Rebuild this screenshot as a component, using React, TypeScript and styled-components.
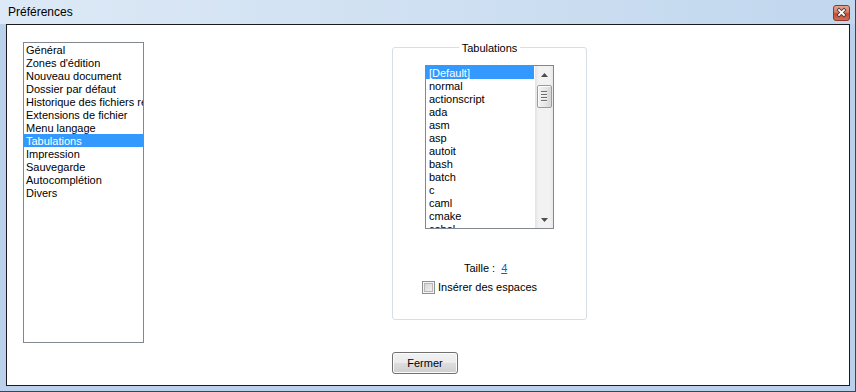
import React, { useState } from 'react'
import styled, { createGlobalStyle } from 'styled-components'

const GlobalStyle = createGlobalStyle`
    html, body {
        margin: 0;
        padding: 0;
        background: #ffffff;
    }
    body {
        font-family: "Liberation Sans", Arial, sans-serif;
        font-size: 11px;
        color: #000000;
    }
`

const categories = [
    'Général',
    "Zones d'édition",
    'Nouveau document',
    'Dossier par défaut',
    'Historique des fichiers récents',
    'Extensions de fichier',
    'Menu langage',
    'Tabulations',
    'Impression',
    'Sauvegarde',
    'Autocomplétion',
    'Divers',
]

const languages = [
    '[Default]',
    'normal',
    'actionscript',
    'ada',
    'asm',
    'asp',
    'autoit',
    'bash',
    'batch',
    'c',
    'caml',
    'cmake',
    'cobol',
]

const CloseIcon: React.FC = () => (
    <svg width="17" height="16" viewBox="0 0 17 16">
        <defs>
            <linearGradient id="closeBg" x1="0" y1="0" x2="0" y2="1">
                <stop offset="0" stopColor="#e9a995" />
                <stop offset="0.45" stopColor="#d77a62" />
                <stop offset="0.55" stopColor="#c6492f" />
                <stop offset="1" stopColor="#d2705a" />
            </linearGradient>
        </defs>
        <rect x="0.5" y="0.5" width="16" height="15" rx="2.5" fill="url(#closeBg)" stroke="#8c3b2b" />
        <path d="M6 5 L11 10 M11 5 L6 10" stroke="#3a3a3a" strokeWidth="3.4" strokeLinecap="square" />
        <path d="M6 5 L11 10 M11 5 L6 10" stroke="#ffffff" strokeWidth="1.8" strokeLinecap="square" />
    </svg>
)

export default function App() {
    const [selected, setSelected] = useState<number>(7)
    const [lang, setLang] = useState<number>(0)
    const [useSpaces, setUseSpaces] = useState<boolean>(false)

    return (
        <>
            <GlobalStyle />
            <Window>
                <TitleBar>
                    <Title>Préférences</Title>
                    <CloseButton aria-label="Fermer">
                        <CloseIcon />
                    </CloseButton>
                </TitleBar>
                <Frame>
                    <Client>
                        <Body>
                            <CategoryList>
                                {categories.map((c, i) => (
                                    <CategoryItem
                                        key={c}
                                        $selected={i === selected}
                                        onClick={() => setSelected(i)}
                                    >
                                        {c}
                                    </CategoryItem>
                                ))}
                            </CategoryList>
                            <GroupBox>
                                <Legend>Tabulations</Legend>
                                <LangList>
                                    <LangItems>
                                        {languages.map((l, i) => (
                                            <LangItem
                                                key={l}
                                                $selected={i === lang}
                                                onClick={() => setLang(i)}
                                            >
                                                {l}
                                            </LangItem>
                                        ))}
                                    </LangItems>
                                    <ScrollBar>
                                        <ArrowButton>
                                            <svg width="7" height="4" viewBox="0 0 7 4">
                                                <path d="M0 4 L3.5 0 L7 4 Z" fill="#4d4d4d" />
                                            </svg>
                                        </ArrowButton>
                                        <Thumb>
                                            <Grip />
                                            <Grip />
                                            <Grip />
                                            <Grip />
                                        </Thumb>
                                        <Track />
                                        <ArrowButton>
                                            <svg width="7" height="4" viewBox="0 0 7 4">
                                                <path d="M0 0 L7 0 L3.5 4 Z" fill="#4d4d4d" />
                                            </svg>
                                        </ArrowButton>
                                    </ScrollBar>
                                </LangList>
                                <SizeRow>
                                    <span>Taille :</span>
                                    <SizeLink href="#">4</SizeLink>
                                </SizeRow>
                                <CheckRow onClick={() => setUseSpaces(!useSpaces)}>
                                    <CheckBox $checked={useSpaces} />
                                    <span>Insérer des espaces</span>
                                </CheckRow>
                            </GroupBox>
                        </Body>
                        <Footer>
                            <Button>Fermer</Button>
                        </Footer>
                    </Client>
                </Frame>
            </Window>
        </>
    )
}

const Window = styled.div`
    width: 856px;
    height: 392px;
    box-sizing: border-box;
    display: flex;
    flex-direction: column;
    border-right: 1px solid #3c4552;
    border-bottom: 1px solid #3c4552;
    background: #b9d1ea;
`

const TitleBar = styled.div`
    height: 24px;
    flex-shrink: 0;
    display: flex;
    flex-direction: row;
    align-items: flex-start;
    justify-content: space-between;
    padding: 0 5px 0 8px;
    background: linear-gradient(to right, #dde9f6 0%, #cfe0f2 50%, #c1d7ee 100%);
`

const Title = styled.div`
    font-size: 12px;
    line-height: 25px;
    color: #000000;
`

const CloseButton = styled.div`
    width: 17px;
    height: 16px;
    margin-top: 5px;
    display: flex;
`

const Frame = styled.div`
    flex: 1;
    display: flex;
    padding: 0 5px 5px 6px;
    background: #b9d1ea;
`

const Client = styled.div`
    flex: 1;
    display: flex;
    flex-direction: column;
    border: 1px solid #1b1b1b;
    background: #ffffff;
    padding: 17px 0 0 16px;
`

const Body = styled.div`
    display: flex;
    flex-direction: row;
    align-items: flex-start;
`

const CategoryList = styled.div`
    width: 121px;
    height: 301px;
    box-sizing: border-box;
    border: 1px solid #828790;
    display: flex;
    flex-direction: column;
    overflow: hidden;
`

const CategoryItem = styled.div<{ $selected?: boolean }>`
    height: 13px;
    flex-shrink: 0;
    line-height: 15px;
    padding-left: 2px;
    white-space: nowrap;
    cursor: default;
    color: ${(p) => (p.$selected ? '#ffffff' : '#000000')};
    background: ${(p) => (p.$selected ? '#3399ff' : 'transparent')};
`

const GroupBox = styled.div`
    position: relative;
    width: 195px;
    height: 273px;
    box-sizing: border-box;
    margin: 5px 0 0 248px;
    border: 1px solid #d5dfe5;
    border-radius: 3px;
    display: flex;
    flex-direction: column;
    align-items: flex-start;
`

const Legend = styled.div`
    position: absolute;
    top: -7px;
    left: 50%;
    transform: translateX(-50%);
    padding: 0 3px;
    background: #ffffff;
    line-height: 14px;
    white-space: nowrap;
`

const LangList = styled.div`
    width: 129px;
    height: 164px;
    box-sizing: border-box;
    margin: 17px 0 0 32px;
    border: 1px solid #828790;
    display: flex;
    flex-direction: row;
`

const LangItems = styled.div`
    flex: 1;
    display: flex;
    flex-direction: column;
    overflow: hidden;
    margin-right: 1px;
`

const LangItem = styled.div<{ $selected?: boolean }>`
    height: 13px;
    flex-shrink: 0;
    line-height: 15px;
    padding-left: 3px;
    cursor: default;
    color: ${(p) => (p.$selected ? '#ffffff' : '#000000')};
    background: ${(p) => (p.$selected ? '#3399ff' : 'transparent')};
`

const ScrollBar = styled.div`
    width: 18px;
    display: flex;
    flex-direction: column;
    align-items: center;
    background: linear-gradient(to right, #e3e3e3 0%, #f2f2f2 20%, #f2f2f2 80%, #e8e8e8 100%);
`

const ArrowButton = styled.div`
    width: 100%;
    height: 17px;
    display: flex;
    align-items: center;
    justify-content: center;
    flex-shrink: 0;
`

const Thumb = styled.div`
    width: 15px;
    height: 23px;
    box-sizing: border-box;
    margin-top: 2px;
    border: 1px solid #9b9b9b;
    border-radius: 2px;
    background: linear-gradient(to right, #f3f3f3 0%, #e8e8e8 50%, #d6d6d6 100%);
    box-shadow: inset 1px 1px 0 #ffffff;
    display: flex;
    flex-direction: column;
    align-items: center;
    justify-content: center;
    gap: 1px;
`

const Grip = styled.div`
    width: 6px;
    height: 1px;
    background: #6f6f6f;
    border-bottom: 1px solid #f4f4f4;
`

const Track = styled.div`
    flex: 1;
`

const SizeRow = styled.div`
    display: flex;
    flex-direction: row;
    gap: 6px;
    margin: 32px 0 0 71px;
    line-height: 14px;
`

const SizeLink = styled.a`
    color: #0066cc;
    text-decoration: underline;
`

const CheckRow = styled.div`
    display: flex;
    flex-direction: row;
    align-items: center;
    gap: 3px;
    margin: 5px 0 0 29px;
    line-height: 14px;
    cursor: default;
`

const CheckBox = styled.div<{ $checked?: boolean }>`
    width: 13px;
    height: 13px;
    box-sizing: border-box;
    border: 1px solid #8e8f8f;
    background: linear-gradient(135deg, #d0d0d0 0%, #f6f6f6 100%);
    box-shadow: inset 0 0 0 1px #f4f4f4, inset 0 0 0 2px #b7b7b7;
`

const Footer = styled.div`
    display: flex;
    flex-direction: row;
    padding: 9px 0 0 369px;
`

const Button = styled.button`
    width: 66px;
    height: 22px;
    box-sizing: border-box;
    border: 1px solid #707070;
    border-radius: 3px;
    background: linear-gradient(to bottom, #f2f2f2 0%, #ebebeb 48%, #dddddd 52%, #cfcfcf 100%);
    box-shadow: inset 0 0 0 1px #fcfcfc;
    font-family: "Liberation Sans", Arial, sans-serif;
    font-size: 11px;
    color: #000000;
    padding: 0;
`
